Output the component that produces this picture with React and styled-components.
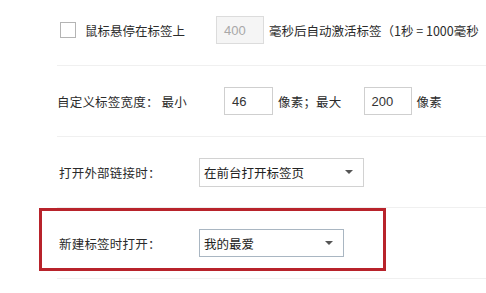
import React from "react";
import styled, { createGlobalStyle } from "styled-components";

const GlobalStyle = createGlobalStyle`
  html, body {
    margin: 0;
    padding: 0;
    background: #fff;
    overflow: hidden;
  }
  body {
    font-family: "Noto Sans CJK SC", "Liberation Sans", sans-serif;
    font-size: 12.5px;
    color: #2b2b2b;
  }
`;

const Page = styled.div`
  width: 486px;
  height: 293px;
  overflow: hidden;
`;

const List = styled.div`
  margin-top: -5px;
  margin-left: 57px;
`;

const Row = styled.div`
  position: relative;
  display: flex;
  align-items: center;
  height: 71px;
  border-bottom: 1px solid #f0f0f0;
  white-space: nowrap;
  padding-left: ${(p) => p.$indent || 0}px;
  box-sizing: border-box;
`;

const Checkbox = styled.span`
  width: 14px;
  height: 14px;
  border: 1px solid #b4b4b4;
  background: #fff;
  margin-right: 9px;
  flex: none;
`;

const Text = styled.span`
  margin-left: ${(p) => p.$ml || 0}px;
  margin-right: ${(p) => p.$mr || 0}px;
  letter-spacing: ${(p) => (p.$tight ? 0 : 0.2)}px;
`;

const NumBox = styled.span`
  display: flex;
  align-items: center;
  width: ${(p) => p.$w || 48}px;
  height: 28px;
  box-sizing: border-box;
  padding-left: 7px;
  border: 1px solid ${(p) => (p.$disabled ? "#dcdcdc" : "#cfcfcf")};
  background: ${(p) => (p.$disabled ? "#f5f5f5" : "#fff")};
  color: ${(p) => (p.$disabled ? "#a8a8a8" : "#333")};
  font-family: "Liberation Sans", sans-serif;
  font-size: 13px;
  flex: none;
`;

const Label = styled.span`
  width: 140px;
  flex: none;
  letter-spacing: 0.2px;
`;

const Select = styled.div`
  display: flex;
  align-items: center;
  justify-content: space-between;
  width: ${(p) => p.$w}px;
  height: ${(p) => p.$h}px;
  box-sizing: border-box;
  padding: 0 10px 0 4px;
  border: 1px solid ${(p) => (p.$focus ? "#a9b6c2" : "#d2d2d2")};
  background: #fff;
  color: #222;
  flex: none;
`;

const Arrow = styled.span`
  width: 0;
  height: 0;
  border-left: 4px solid transparent;
  border-right: 4px solid transparent;
  border-top: 4px solid #555;
`;

const Highlight = styled.div`
  position: absolute;
  left: -18px;
  top: 0;
  width: 347px;
  height: 63px;
  box-sizing: border-box;
  border: 3px solid #b8232b;
  pointer-events: none;
`;

export default function App() {
  return (
    <Page>
      <GlobalStyle />
      <List>
        <Row $indent={3}>
          <Checkbox />
          <Text $tight $mr={31}>鼠标悬停在标签上</Text>
          <NumBox $disabled>400</NumBox>
          <Text $tight $ml={5}>毫秒后自动激活标签（1秒 = 1000毫秒</Text>
        </Row>
        <Row>
          <Text $mr={37}>自定义标签宽度： 最小</Text>
          <NumBox $w={49}>46</NumBox>
          <Text $ml={5} $mr={22}>像素；最大</Text>
          <NumBox>200</NumBox>
          <Text $ml={5}>像素</Text>
        </Row>
        <Row $indent={2}>
          <Label>打开外部链接时：</Label>
          <Select $w={165} $h={29}>
            <span>在前台打开标签页</span>
            <Arrow />
          </Select>
        </Row>
        <Row $indent={2}>
          <Highlight />
          <Label>新建标签时打开：</Label>
          <Select $w={145} $h={28} $focus>
            <span>我的最爱</span>
            <Arrow />
          </Select>
        </Row>
      </List>
    </Page>
  );
}
